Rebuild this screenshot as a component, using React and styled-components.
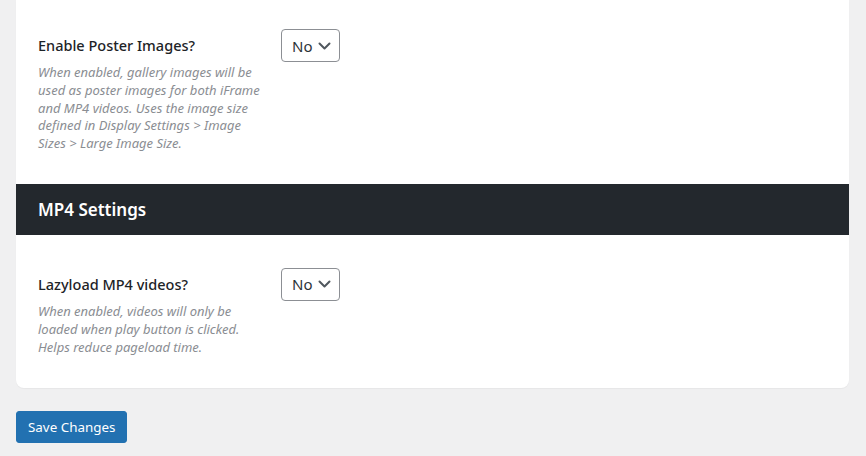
import styled, { createGlobalStyle } from 'styled-components';

const GlobalStyle = createGlobalStyle`
    html, body {
        margin: 0;
        padding: 0;
        background: #f0f0f1;
        font-family: "Noto Sans", "Open Sans", sans-serif;
        color: #1d2327;
    }
`;

const SETTINGS = [
    {
        id: 'poster',
        label: 'Enable Poster Images?',
        value: 'No',
        description:
            'When enabled, gallery images will be used as poster images for both iFrame and MP4 videos. Uses the image size defined in Display Settings > Image Sizes > Large Image Size.',
    },
];

const MP4_SETTINGS = [
    {
        id: 'lazyload',
        label: 'Lazyload MP4 videos?',
        value: 'No',
        description: 'When enabled, videos will only be loaded when play button is clicked. Helps reduce pageload time.',
    },
];

function Chevron() {
    return (
        <svg width="13" height="8" viewBox="0 0 13 8" fill="none">
            <path d="M1.5 1.5l5 5 5-5" stroke="#50575e" strokeWidth="2" strokeLinecap="round" strokeLinejoin="round" />
        </svg>
    );
}

function SettingRow({ label, value, description, top, bottom }) {
    return (
        <Row $top={top} $bottom={bottom}>
            <LabelCol>
                <Label>{label}</Label>
                <Description>{description}</Description>
            </LabelCol>
            <Select>
                <span>{value}</span>
                <Chevron />
            </Select>
        </Row>
    );
}

function App() {
    return (
        <>
            <GlobalStyle />
            <Page>
                <Card>
                    {SETTINGS.map(s => (
                        <SettingRow key={s.id} {...s} top={29} bottom={31} />
                    ))}
                    <SectionHeader>MP4 Settings</SectionHeader>
                    {MP4_SETTINGS.map(s => (
                        <SettingRow key={s.id} {...s} top={33} bottom={32} />
                    ))}
                </Card>
                <SaveButton>Save Changes</SaveButton>
            </Page>
        </>
    );
}

const Page = styled.div`
    padding: 0 17px 0 16px;
    display: flex;
    flex-direction: column;
    align-items: flex-start;
    gap: 23px;
`;

const Card = styled.div`
    align-self: stretch;
    background: #fff;
    border-radius: 0 0 8px 8px;
    box-shadow: 0 1px 1px rgba(0, 0, 0, 0.04);
    overflow: hidden;
`;

const Row = styled.div`
    display: grid;
    grid-template-columns: 230px auto;
    column-gap: 13px;
    align-items: start;
    padding: ${p => p.$top}px 22px ${p => p.$bottom}px;
`;

const LabelCol = styled.div`
    display: flex;
    flex-direction: column;
    gap: 3px;
`;

const Label = styled.div`
    font-size: 14.5px;
    font-weight: 500;
    line-height: 32px;
    color: #1d2327;
`;

const Description = styled.p`
    margin: 0;
    font-size: 13px;
    line-height: 17.8px;
    font-style: italic;
    color: #8a8d92;
    max-width: 222px;
`;

const Select = styled.div`
    box-sizing: border-box;
    width: 59px;
    height: 33px;
    border: 1px solid #8c8f94;
    border-radius: 4px;
    display: flex;
    align-items: center;
    justify-content: space-between;
    padding: 0 8px 0 10px;
    font-size: 15px;
    color: #2c3338;
`;

const SectionHeader = styled.h2`
    margin: 0;
    background: #23282d;
    color: #fff;
    height: 51px;
    display: flex;
    align-items: center;
    padding: 0 22px;
    font-size: 17px;
    font-weight: 600;
`;

const SaveButton = styled.button`
    background: #2271b1;
    border: 1px solid #2271b1;
    border-radius: 3px;
    color: #fff;
    font-family: inherit;
    font-size: 13.4px;
    height: 32px;
    padding: 0 11px;
    cursor: pointer;
`;

export default App;
